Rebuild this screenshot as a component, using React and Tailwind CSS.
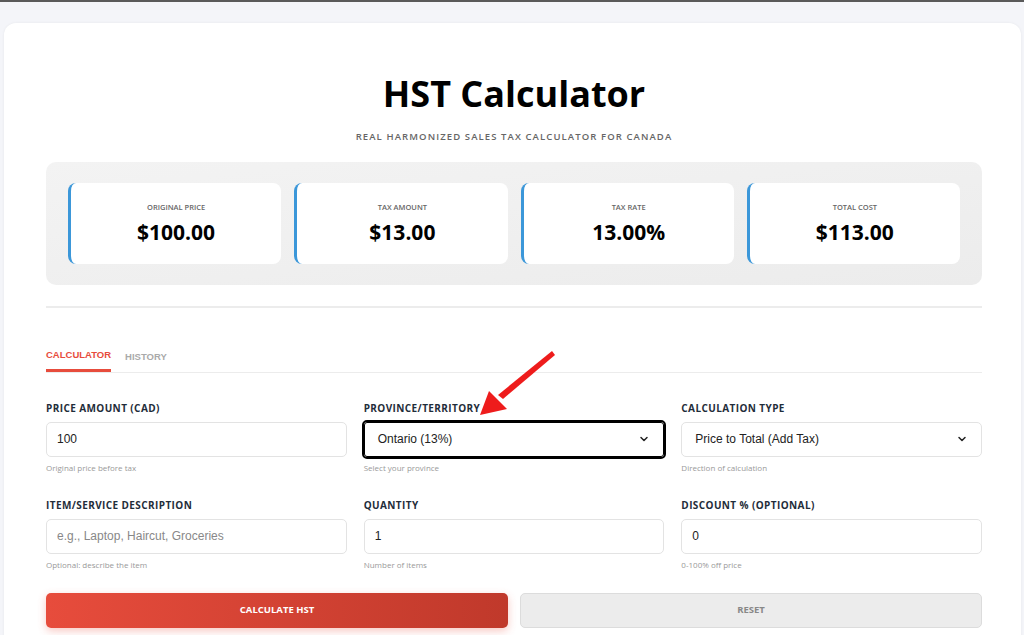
import { ChevronDown } from 'lucide-react';

const stats = [
  { label: 'Original Price', value: '$100.00' },
  { label: 'Tax Amount', value: '$13.00' },
  { label: 'Tax Rate', value: '13.00%' },
  { label: 'Total Cost', value: '$113.00' },
];

const sans = { fontFamily: '"Open Sans", "Noto Sans", sans-serif' };

function Field({ label, help, children }) {
  return (
    <div className="flex flex-col">
      <label className="text-[10px] font-bold uppercase tracking-[0.4px] text-[#1f2d3a] mb-[7px] leading-[14px]">
        {label}
      </label>
      {children}
      <p className="text-[8px] text-[#999] mt-[5px] leading-[12px]">{help}</p>
    </div>
  );
}

const inputCls =
  "h-[35px] w-full rounded-[5px] border border-[#e3e3e3] bg-white px-[10px] text-[12px] text-[#222] outline-none [font-family:'Liberation_Sans',Arial,sans-serif] placeholder:text-[#888]";

function Select({ value, focused }) {
  return (
    <div
      className={
        focused
          ? 'relative flex h-[35px] items-center rounded-[3px] border border-black bg-white px-[13px] outline-2 outline-black'
          : 'relative flex h-[35px] items-center rounded-[5px] border border-[#e3e3e3] bg-white px-[13px]'
      }
    >
      <span className="flex-1 text-[12px] text-[#222] [font-family:'Liberation_Sans',Arial,sans-serif]">
        {value}
      </span>
      <ChevronDown size={12} strokeWidth={3} className="text-[#222]" />
    </div>
  );
}

export default function App() {
  return (
    <div className="relative min-h-[635px] border-t-2 border-[#5a5a5a] bg-[#f4f5f9] pt-[21px] pl-[4px] pr-[3px]" style={sans}>
      <div className="min-h-[620px] rounded-t-[12px] bg-white pl-[42px] pr-[39px] pt-[47px] shadow-[0_0_3px_rgba(0,0,0,0.06)]">
        <h1 className="text-center text-[36px] font-bold leading-[48px] text-black">HST Calculator</h1>
        <p className="mt-[12px] text-center text-[9.5px] font-semibold uppercase tracking-[1.1px] text-[#666]">
          Real Harmonized Sales Tax Calculator for Canada
        </p>

        <div className="mt-[18px] grid grid-cols-4 gap-[13px] rounded-[10px] bg-gradient-to-br from-[#f3f3f3] to-[#ececec] px-[22px] py-[21px]">
          {stats.map((s) => (
            <div
              key={s.label}
              className="flex h-[81px] flex-col items-center justify-center rounded-[8px] border-l-[3px] border-[#3b97d9] bg-white"
            >
              <div className="text-[7.5px] font-semibold uppercase text-[#666]">{s.label}</div>
              <div className="mt-[5px] text-[21px] font-bold leading-[28px] text-black">{s.value}</div>
            </div>
          ))}
        </div>

        <div className="mt-[21px] h-[2px] bg-[#ececec]" />

        <div className="mt-[40px] flex gap-[14px] border-b border-[#ececec]">
          <button className="border-b-[3px] border-[#e74c3c] pb-[6px] text-[9.5px] font-bold uppercase text-[#e74c3c] [font-family:'Liberation_Sans',Arial,sans-serif]">
            Calculator
          </button>
          <button className="pb-[6px] text-[9.5px] font-bold uppercase text-[#aaa] [font-family:'Liberation_Sans',Arial,sans-serif]">
            History
          </button>
        </div>

        <div className="mt-[28px] grid grid-cols-3 gap-x-[17px] gap-y-[24px]">
          <Field label="Price Amount (CAD)" help="Original price before tax">
            <input className={inputCls} defaultValue="100" />
          </Field>
          <Field label="Province/Territory" help="Select your province">
            <Select value="Ontario (13%)" focused />
          </Field>
          <Field label="Calculation Type" help="Direction of calculation">
            <Select value="Price to Total (Add Tax)" />
          </Field>
          <Field label="Item/Service Description" help="Optional: describe the item">
            <input className={inputCls} placeholder="e.g., Laptop, Haircut, Groceries" />
          </Field>
          <Field label="Quantity" help="Number of items">
            <input className={inputCls} defaultValue="1" />
          </Field>
          <Field label="Discount % (Optional)" help="0-100% off price">
            <input className={inputCls} defaultValue="0" />
          </Field>
        </div>

        <div className="mt-[22px] grid grid-cols-2 gap-[12px]">
          <button className="h-[35px] rounded-[5px] bg-gradient-to-r from-[#e74c3c] to-[#c0392b] text-[9.5px] font-bold uppercase text-white shadow-[0_3px_8px_rgba(231,76,60,0.3)]">
            Calculate HST
          </button>
          <button className="h-[35px] rounded-[5px] border border-[#dcdcdc] bg-[#ececec] text-[9.5px] font-bold uppercase text-[#888]">
            Reset
          </button>
        </div>
      </div>

      <svg className="absolute left-[470px] top-[340px]" width="100" height="85" viewBox="470 340 100 85">
        <polygon points="552,349 555,353 503,397 498,393" fill="#ee1c1c" />
        <polygon points="480,413 489,389 507,407" fill="#ee1c1c" />
      </svg>
    </div>
  );
}
